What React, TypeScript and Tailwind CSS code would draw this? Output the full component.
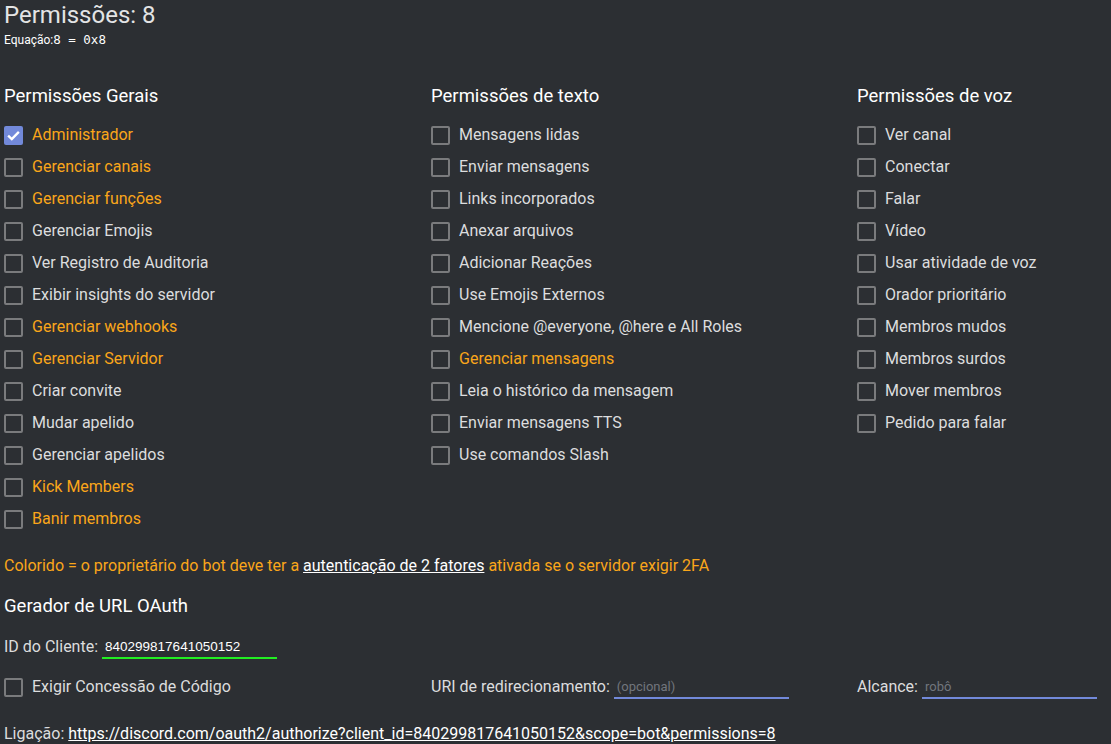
import React from 'react';

type Perm = { label: string; warn?: boolean; checked?: boolean };

const geral: Perm[] = [
  { label: 'Administrador', warn: true, checked: true },
  { label: 'Gerenciar canais', warn: true },
  { label: 'Gerenciar funções', warn: true },
  { label: 'Gerenciar Emojis' },
  { label: 'Ver Registro de Auditoria' },
  { label: 'Exibir insights do servidor' },
  { label: 'Gerenciar webhooks', warn: true },
  { label: 'Gerenciar Servidor', warn: true },
  { label: 'Criar convite' },
  { label: 'Mudar apelido' },
  { label: 'Gerenciar apelidos' },
  { label: 'Kick Members', warn: true },
  { label: 'Banir membros', warn: true },
];

const texto: Perm[] = [
  { label: 'Mensagens lidas' },
  { label: 'Enviar mensagens' },
  { label: 'Links incorporados' },
  { label: 'Anexar arquivos' },
  { label: 'Adicionar Reações' },
  { label: 'Use Emojis Externos' },
  { label: 'Mencione @everyone, @here e All Roles' },
  { label: 'Gerenciar mensagens', warn: true },
  { label: 'Leia o histórico da mensagem' },
  { label: 'Enviar mensagens TTS' },
  { label: 'Use comandos Slash' },
];

const voz: Perm[] = [
  { label: 'Ver canal' },
  { label: 'Conectar' },
  { label: 'Falar' },
  { label: 'Vídeo' },
  { label: 'Usar atividade de voz' },
  { label: 'Orador prioritário' },
  { label: 'Membros mudos' },
  { label: 'Membros surdos' },
  { label: 'Mover membros' },
  { label: 'Pedido para falar' },
];

function Box({ checked }: { checked?: boolean }) {
  if (checked) {
    return (
      <span className="w-[19px] h-[19px] rounded-[2px] bg-[#7289da] flex items-center justify-center shrink-0">
        <svg width="15" height="15" viewBox="0 0 14 14" fill="none">
          <path d="M2 7.2 L5.4 10.4 L12 3.6" stroke="white" strokeWidth="2.2" />
        </svg>
      </span>
    );
  }
  return <span className="w-[19px] h-[19px] rounded-[2px] border-2 border-[#7a7b7d] shrink-0" />;
}

function Row({ p }: { p: Perm }) {
  return (
    <div className="h-[32px] flex items-center gap-[9px]">
      <Box checked={p.checked} />
      <span className={p.warn ? 'text-[#faa61a]' : 'text-[#dcddde]'}>{p.label}</span>
    </div>
  );
}

function Column({ title, items }: { title: string; items: Perm[] }) {
  return (
    <div>
      <h2 className="text-[18.5px] leading-[24px] text-white">{title}</h2>
      <div className="mt-[11px]">
        {items.map((p) => <Row key={p.label} p={p} />)}
      </div>
    </div>
  );
}

export default function App() {
  return (
    <div className="min-h-screen bg-[#2c2f33] text-[#dcddde] text-[16px] pl-[4px] pt-[2px] font-['Roboto','Liberation_Sans',sans-serif] overflow-hidden">
      <h1 className="text-[24px] leading-[26px] text-[#e3e4e5]">Permissões: 8</h1>
      <p className="mt-[5px] text-[12px] leading-[14px] text-white">
        Equação:<span className="font-['DejaVu_Sans_Mono',monospace] text-[12.5px]">8 = 0x8</span>
      </p>

      <div className="mt-[37px] grid grid-cols-[427px_426px_1fr]">
        <Column title="Permissões Gerais" items={geral} />
        <Column title="Permissões de texto" items={texto} />
        <Column title="Permissões de voz" items={voz} />
      </div>

      <p className="mt-[21px] text-[16px] leading-[20px] text-[#faa61a]">
        Colorido = o proprietário do bot deve ter a{' '}
        <a className="text-white underline">autenticação de 2 fatores</a> ativada se o servidor exigir 2FA
      </p>

      <h2 className="mt-[18px] text-[18.5px] leading-[24px] text-white">Gerador de URL OAuth</h2>

      <div className="mt-[17px] h-[24px] flex items-center text-[16px]">
        <span>ID do Cliente:</span>
        <div className="ml-[4px] w-[175px] h-[24px] border-b-2 border-[#22ee22] flex items-center pl-[3px] pt-[2px] text-[13.5px] font-medium text-white font-['Liberation_Sans',sans-serif]">
          840299817641050152
        </div>
      </div>

      <div className="mt-[16px] grid grid-cols-[427px_426px_1fr] text-[16px]">
        <div className="h-[24px] flex items-center gap-[9px]">
          <Box />
          <span>Exigir Concessão de Código</span>
        </div>
        <div className="h-[24px] flex items-center">
          <span>URI de redirecionamento:</span>
          <div className="ml-[4px] w-[175px] h-[24px] border-b-2 border-[#7289da] flex items-center pl-[3px] pt-[2px] text-[13px] text-[#72767d]">
            (opcional)
          </div>
        </div>
        <div className="h-[24px] flex items-center">
          <span>Alcance:</span>
          <div className="ml-[4px] w-[175px] h-[24px] border-b-2 border-[#7289da] flex items-center pl-[3px] pt-[2px] text-[13px] text-[#72767d]">
            robô
          </div>
        </div>
      </div>

      <p className="mt-[25px] text-[16px] leading-[20px]">
        Ligação:{' '}
        <a className="text-white underline">
          https://discord.com/oauth2/authorize?client_id=840299817641050152&amp;scope=bot&amp;permissions=8
        </a>
      </p>
    </div>
  );
}
